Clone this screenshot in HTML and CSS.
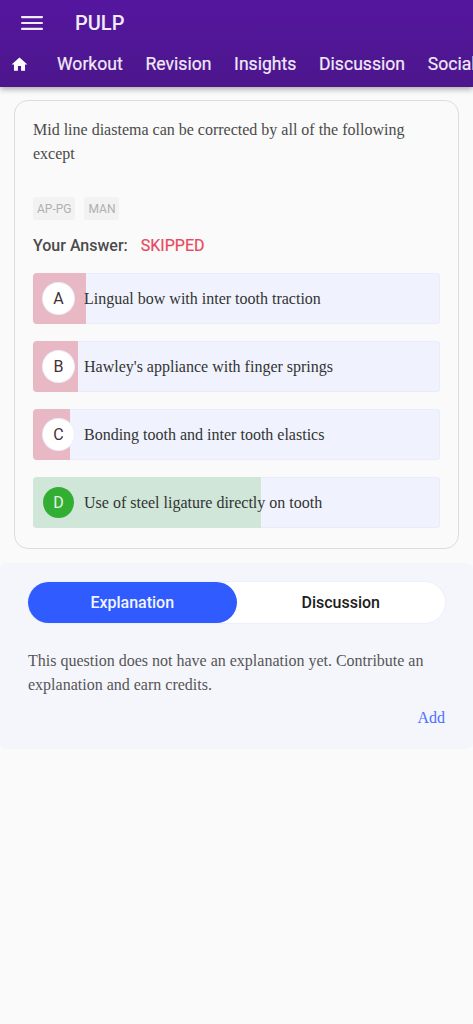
FILE: index.html
```html
<!DOCTYPE html>
<html lang="en">
<head>
<meta charset="utf-8">
<title>PULP</title>
<link rel="stylesheet" href="styles.css">
</head>
<body>
<header class="appbar">
  <div class="topbar">
    <svg class="menu" viewBox="0 0 22 14" aria-hidden="true"><rect y="0" width="22" height="2.2" rx="1"/><rect y="5.9" width="22" height="2.2" rx="1"/><rect y="11.8" width="22" height="2.2" rx="1"/></svg>
    <span class="brand">PULP</span>
  </div>
  <nav class="tabs">
    <svg class="home" viewBox="0 0 24 24" aria-hidden="true"><path d="M10 20v-6h4v6h5v-8h3L12 3 2 12h3v8z"/></svg>
    <span class="tab">Workout</span>
    <span class="tab">Revision</span>
    <span class="tab">Insights</span>
    <span class="tab">Discussion</span>
    <span class="tab">Social</span>
  </nav>
</header>
<main>
  <section class="card">
    <p class="question">Mid line diastema can be corrected by all of the following except</p>
    <div class="tags"><span class="tag">AP-PG</span><span class="tag">MAN</span></div>
    <div class="answer"><span>Your Answer:</span><span class="skipped">SKIPPED</span></div>
    <div class="options">
      <div class="option"><div class="bar bar-wrong" style="width:53px"></div><span class="letter">A</span><span class="text">Lingual bow with inter tooth traction</span></div>
      <div class="option"><div class="bar bar-wrong" style="width:45px"></div><span class="letter">B</span><span class="text">Hawley's appliance with finger springs</span></div>
      <div class="option"><div class="bar bar-wrong" style="width:37px"></div><span class="letter">C</span><span class="text">Bonding tooth and inter tooth elastics</span></div>
      <div class="option"><div class="bar bar-right" style="width:228px"></div><span class="letter letter-right">D</span><span class="text">Use of steel ligature directly on tooth</span></div>
    </div>
  </section>
  <section class="panel">
    <div class="switch">
      <button class="seg seg-active">Explanation</button>
      <button class="seg">Discussion</button>
    </div>
    <p class="note">This question does not have an explanation yet. Contribute an explanation and earn credits.</p>
    <div class="add-row"><a class="add">Add</a></div>
  </section>
</main>
</body>
</html>
```
FILE: styles.css
```css
* { box-sizing: border-box; }
html, body { margin: 0; padding: 0; }
body { width: 473px; height: 1024px; overflow: hidden; background: #fafafa; font-family: Roboto, sans-serif; }

.appbar { height: 87px; background: linear-gradient(180deg, #55169f 0%, #4c168c 100%); color: #f1eaf7; box-shadow: 0 2px 6px rgba(0,0,0,.35); position: relative; overflow: hidden; }
.topbar { height: 46px; display: flex; align-items: center; padding-left: 21px; }
.menu { width: 22px; height: 14px; fill: #f1eaf7; margin-right: 32px; }
.brand { font-size: 20px; font-weight: 500; line-height: 1; }
.tabs { display: flex; align-items: center; height: 36px; padding-left: 10px; white-space: nowrap; }
.home { width: 19px; height: 19px; fill: #fff; margin-right: 28px; flex: none; }
.tab { font-size: 17.6px; font-weight: 400; margin-right: 22.7px; flex: none; -webkit-text-stroke: .2px #f1eaf7; }

main { display: block; padding-top: 13px; }
.card { margin: 0 14px; height: 449px; border: 1px solid #dcdcdc; border-radius: 14px; padding: 17px 18px 0; }
.question { margin: 0; font: 16px/24px "Liberation Serif", serif; color: #4a4a4a; }
.tags { display: flex; gap: 9px; margin-top: 31px; }
.tag { height: 23px; padding: 0 4px; display: flex; align-items: center; background: #f2f2f2; border-radius: 3px; font-size: 12px; color: #b0b0b0; }
.answer { display: flex; gap: 13px; margin-top: 15px; height: 20px; align-items: center; font-size: 16px; font-weight: 500; color: #4a4a4a; }
.skipped { color: #e8485f; font-weight: 400; -webkit-text-stroke: .2px #e8485f; }
.options { display: flex; flex-direction: column; gap: 17px; margin-top: 18px; }
.option { position: relative; height: 51px; display: flex; align-items: center; background: #f0f3fd; box-shadow: inset 0 0 0 1px #e9edfb; border-radius: 4px; padding-left: 10px; overflow: hidden; }
.bar { position: absolute; left: 0; top: 0; bottom: 0; }
.bar-wrong { background: #e8b9c5; }
.bar-right { background: #cfe6d8; }
.letter { position: relative; width: 31px; height: 31px; border-radius: 50%; background: #fff; display: flex; align-items: center; justify-content: center; font-size: 16px; color: #43303a; flex: none; box-shadow: 0 0 0 1px #edeefa; }
.letter-right { background: #32ae32; color: #e5f5e5; box-shadow: none; }
.text { position: relative; margin-left: 10px; font: 16px/24px "Liberation Serif", serif; color: #333; }

.panel { margin-top: 14px; height: 186px; background: #f5f6fc; border-radius: 6px; padding: 19px 28px 0; }
.switch { display: flex; height: 41px; width: 417px; background: #fff; border-radius: 21px; box-shadow: 0 0 0 1px #edf0fc; }
.seg { flex: 1; border: 0; background: none; font: 500 16px Roboto, sans-serif; color: #1c1c1c; border-radius: 21px; padding: 0; }
.seg-active { background: #2f5bff; color: #f2f5ff; }
.note { margin: 26px 0 0; font: 16px/24px "Liberation Serif", serif; color: #555; }
.add-row { display: flex; justify-content: flex-end; margin-top: 9px; }
.add { font: 16px/24px "Liberation Serif", serif; color: #4a70ff; }
```
